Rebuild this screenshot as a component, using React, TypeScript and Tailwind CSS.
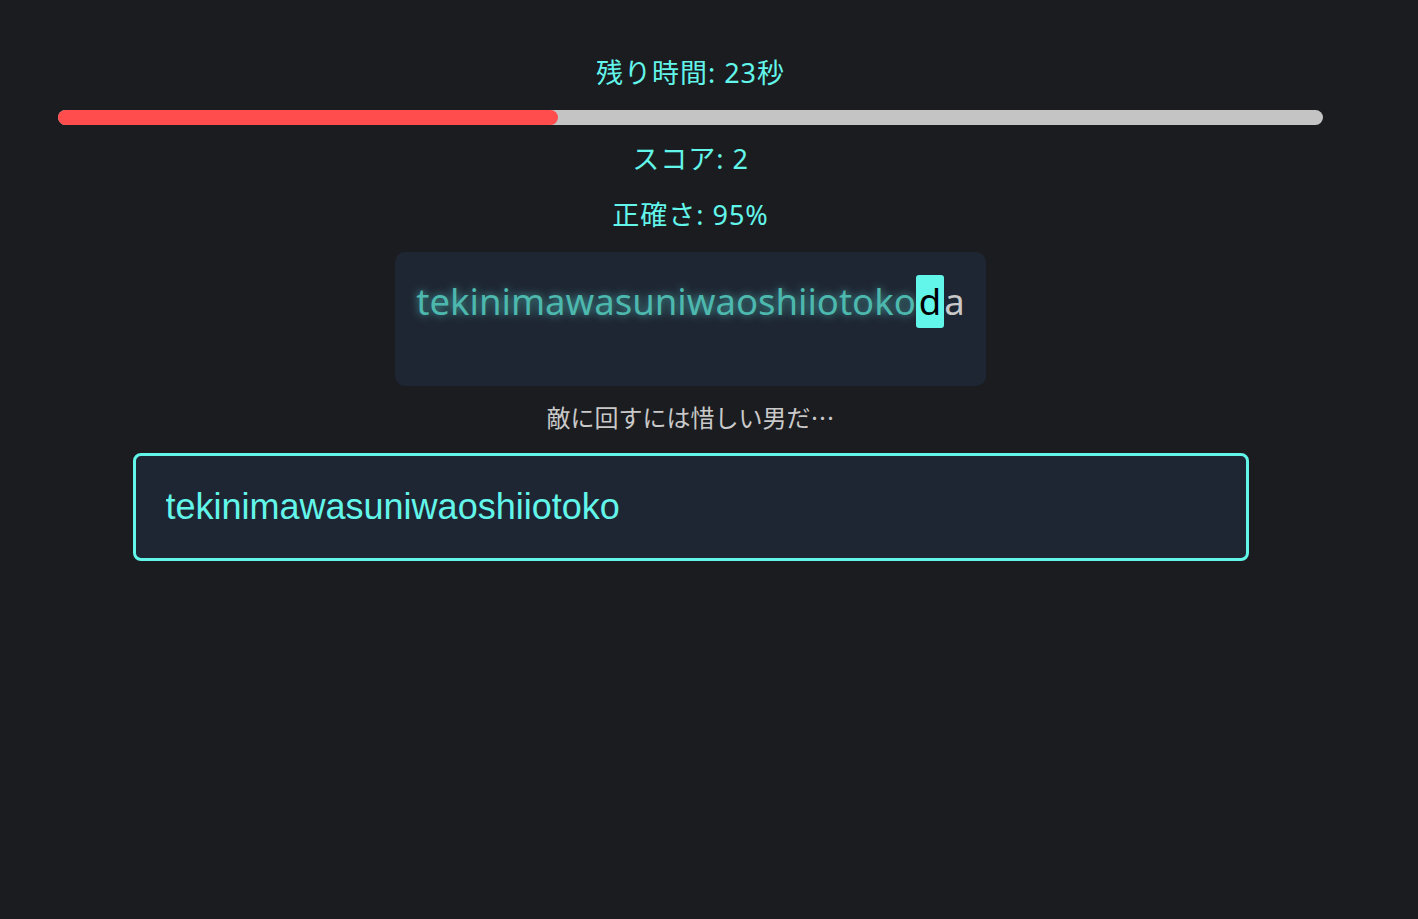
const typed = "tekinimawasuniwaoshiiotoko";
const current = "d";
const rest = "a";

const App = () => {
  return (
    <div className="min-h-[919px] w-full bg-[#1b1c20] font-['Noto_Sans','Noto_Sans_CJK_JP',sans-serif]">
      <div className="w-[1381px] px-[58px] pt-[55px] text-center">
        <div className="text-[27px] leading-[36px] tracking-[1px] text-[#62f5ea]">残り時間: 23秒</div>

        <div className="mt-[19px] h-[15px] w-full rounded-full bg-[#c4c4c4]">
          <div className="h-full rounded-full bg-[#ff4d4d]" style={{ width: 500 }} />
        </div>

        <div className="mt-[16px] text-[27px] leading-[36px] tracking-[1px] text-[#62f5ea]">スコア: 2</div>
        <div className="mt-[20px] text-[27px] leading-[36px] tracking-[1px] text-[#62f5ea]">正確さ: 95%</div>

        <div className="mt-[19px] inline-block h-[134px] rounded-[10px] bg-[#1f2633] px-[21px] pt-[23px] text-left">
          <div className="flex items-center text-[36.5px] leading-[53px] font-['Noto_Sans',sans-serif]">
            <span className="text-[#4db8ae] [text-shadow:0_0_9px_rgba(98,245,234,0.6)]">{typed}</span>
            <span className="rounded-[3px] bg-[#62f5ea] px-[3px] text-black">{current}</span>
            <span className="text-[#c8c8c8]">{rest}</span>
          </div>
        </div>

        <div className="mt-[15px] text-[24px] leading-[32px] text-[#c9c9c9] font-['Noto_Sans_CJK_JP',sans-serif]">
          敵に回すには惜しい男だ…
        </div>

        <div className="mx-auto mt-[20px] flex h-[108px] w-[1116px] items-center rounded-[8px] border-[3px] border-[#62f5ea] bg-[#1f2633] px-[30px] text-left">
          <input
            className="w-full bg-transparent text-[36px] text-[#62f5ea] outline-none font-['Liberation_Sans',Arial,sans-serif]"
            defaultValue={typed}
            readOnly
          />
        </div>
      </div>
    </div>
  );
};

export default App;
